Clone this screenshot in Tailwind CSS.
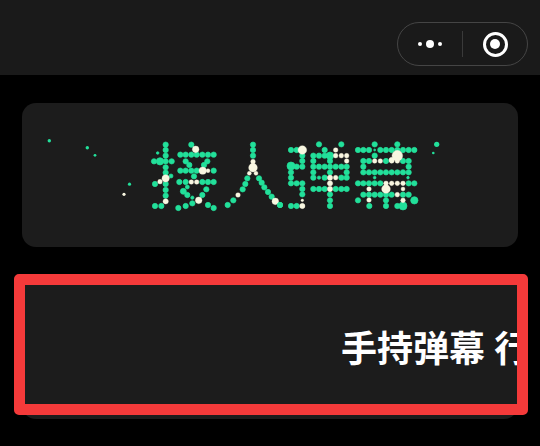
<!doctype html>
<html lang="zh">
<head>
<meta charset="utf-8">
<script src="https://cdn.jsdelivr.net/npm/@tailwindcss/browser@4"></script>
</head>
<body class="bg-black">
<div class="relative w-[540px] h-[446px] overflow-hidden bg-black font-['Noto_Sans_CJK_SC','Noto_Sans',sans-serif]">
  <header class="h-[75px] bg-[#1a1a1a] flex justify-end items-start pt-[22px] pr-[12px]">
    <div class="w-[131px] h-[44px] rounded-full border border-[#454545] flex items-center">
      <div class="w-[64px] flex items-center justify-center gap-[4px]">
        <span class="w-[4px] h-[4px] rounded-full bg-white"></span>
        <span class="w-[8px] h-[8px] rounded-full bg-white"></span>
        <span class="w-[4px] h-[4px] rounded-full bg-white"></span>
      </div>
      <div class="w-px h-[26px] bg-[#3a3a3a]"></div>
      <div class="flex-1 flex items-center justify-center">
        <div class="w-[25px] h-[25px] rounded-full border-[3px] border-white flex items-center justify-center">
          <span class="w-[10px] h-[10px] rounded-full bg-white"></span>
        </div>
      </div>
    </div>
  </header>
  <main class="px-[22px] pt-[28px] flex flex-col gap-[28px]">
    <section class="h-[144px] rounded-[14px] bg-[#1c1c1c] overflow-hidden">
      <svg class="block" width="496" height="144" viewBox="22 103 496 144" role="img" aria-label="接人弹幕">
        <g fill="#22e09a">
          <circle cx="49.3" cy="140.7" r="1.7"/><circle cx="87.3" cy="147.7" r="1.7"/><circle cx="95" cy="155.3" r="1.4"/><circle cx="129.5" cy="184.2" r="1.6"/><circle cx="436.7" cy="144.3" r="2.6"/><circle cx="433.3" cy="153" r="1.3"/>
        </g>
        <circle cx="124" cy="194.3" r="1.6" fill="#f8f6e0"/>
        <g transform="translate(130 125) scale(.33333)">
          <g fill="#22e09a" stroke="#22e09a" stroke-width="2">
            <circle cx="107" cy="59" r="8"/><circle cx="107" cy="75" r="8"/><circle cx="107" cy="92" r="8"/><circle cx="107" cy="127" r="8"/><circle cx="107" cy="143" r="8"/><circle cx="107" cy="177" r="8"/><circle cx="107" cy="195" r="8"/><circle cx="107" cy="212" r="8"/>
            <circle cx="72" cy="109" r="8"/><circle cx="90" cy="109" r="11"/><circle cx="107" cy="109" r="8"/><circle cx="125" cy="109" r="8"/><circle cx="83" cy="84" r="4"/><circle cx="75" cy="177" r="8"/><circle cx="123" cy="153" r="6"/><circle cx="94" cy="243" r="8"/><circle cx="75" cy="243" r="8"/>
            <circle cx="184" cy="59" r="8"/>
            <circle cx="151" cy="89" r="8"/><circle cx="167" cy="89" r="8"/><circle cx="184" cy="89" r="8"/><circle cx="200" cy="89" r="8"/><circle cx="217" cy="89" r="8"/><circle cx="234" cy="89" r="8"/><circle cx="251" cy="89" r="8"/>
            <circle cx="167" cy="109" r="8"/><circle cx="178" cy="120" r="8"/><circle cx="232" cy="109" r="8"/><circle cx="222" cy="120" r="8"/>
            <circle cx="151" cy="137" r="8"/><circle cx="167" cy="137" r="8"/><circle cx="184" cy="137" r="8"/><circle cx="200" cy="137" r="8"/><circle cx="251" cy="137" r="8"/><circle cx="192" cy="154" r="8"/>
            <circle cx="148" cy="171" r="8"/><circle cx="167" cy="171" r="8"/><circle cx="217" cy="171" r="8"/><circle cx="234" cy="171" r="8"/><circle cx="251" cy="171" r="8"/>
            <circle cx="172" cy="186" r="6"/><circle cx="160" cy="199" r="9"/><circle cx="172" cy="210" r="8"/><circle cx="229" cy="193" r="8"/><circle cx="217" cy="210" r="8"/><circle cx="187" cy="218" r="5"/><circle cx="187" cy="235" r="8"/><circle cx="167" cy="243" r="8"/><circle cx="145" cy="249" r="8"/><circle cx="234" cy="240" r="8"/><circle cx="251" cy="249" r="8"/>
            <circle cx="369" cy="59" r="8"/><circle cx="369" cy="75" r="8"/><circle cx="369" cy="92" r="8"/>
            <circle cx="352" cy="160" r="8"/><circle cx="346" cy="177" r="8"/><circle cx="338" cy="193" r="8"/><circle cx="310" cy="226" r="8"/><circle cx="293" cy="240" r="8"/>
            <circle cx="387" cy="160" r="8"/><circle cx="395" cy="173" r="8"/><circle cx="403" cy="187" r="8"/><circle cx="414" cy="201" r="8"/><circle cx="425" cy="215" r="8"/><circle cx="450" cy="240" r="8"/>
          </g>
          <g fill="#f8f6e0" stroke="#f8f6e0" stroke-width="1">
            <circle cx="107" cy="160" r="11"/><circle cx="90" cy="170" r="7"/><circle cx="107" cy="229" r="8"/><circle cx="197" cy="73" r="10"/>
            <circle cx="218" cy="137" r="11"/><circle cx="234" cy="137" r="6"/><circle cx="184" cy="171" r="7"/><circle cx="200" cy="171" r="7"/><circle cx="206" cy="226" r="10"/>
            <circle cx="369" cy="110" r="7"/><circle cx="369" cy="128" r="13"/><circle cx="358" cy="145" r="6"/><circle cx="378" cy="145" r="6"/><circle cx="324" cy="210" r="7"/><circle cx="436" cy="229" r="10"/>
          </g>
        </g>
        <g transform="translate(280 125) scale(.33333)">
          <g fill="#22e09a" stroke="#22e09a" stroke-width="2">
            <circle cx="33" cy="75" r="8"/><circle cx="50" cy="75" r="8"/><circle cx="67" cy="92" r="8"/><circle cx="67" cy="108" r="8"/><circle cx="67" cy="125" r="8"/><circle cx="50" cy="125" r="8"/><circle cx="33" cy="123" r="12"/>
            <circle cx="33" cy="142" r="8"/><circle cx="33" cy="158" r="8"/><circle cx="33" cy="175" r="8"/><circle cx="50" cy="175" r="8"/><circle cx="67" cy="175" r="8"/><circle cx="67" cy="192" r="8"/><circle cx="67" cy="208" r="8"/><circle cx="50" cy="243" r="8"/><circle cx="33" cy="243" r="8"/><circle cx="0" cy="240" r="8"/>
            <circle cx="117" cy="58" r="8"/><circle cx="184" cy="58" r="8"/><circle cx="134" cy="75" r="8"/>
            <circle cx="100" cy="92" r="8"/><circle cx="117" cy="92" r="8"/><circle cx="134" cy="92" r="8"/><circle cx="150" cy="92" r="11"/><circle cx="100" cy="108" r="8"/><circle cx="150" cy="108" r="8"/>
            <circle cx="100" cy="125" r="8"/><circle cx="117" cy="125" r="8"/><circle cx="134" cy="125" r="8"/><circle cx="150" cy="125" r="8"/><circle cx="167" cy="125" r="8"/><circle cx="184" cy="125" r="8"/><circle cx="200" cy="125" r="8"/>
            <circle cx="100" cy="142" r="8"/><circle cx="150" cy="142" r="8"/><circle cx="200" cy="142" r="8"/>
            <circle cx="100" cy="158" r="8"/><circle cx="117" cy="158" r="5"/><circle cx="134" cy="158" r="8"/><circle cx="184" cy="158" r="8"/><circle cx="200" cy="158" r="8"/>
            <circle cx="100" cy="192" r="8"/><circle cx="117" cy="192" r="8"/><circle cx="134" cy="192" r="8"/><circle cx="167" cy="192" r="8"/><circle cx="184" cy="192" r="8"/><circle cx="200" cy="192" r="8"/>
            <circle cx="150" cy="208" r="8"/><circle cx="150" cy="226" r="8"/><circle cx="150" cy="243" r="8"/>
            <circle cx="234" cy="75" r="8"/><circle cx="250" cy="75" r="8"/><circle cx="267" cy="75" r="8"/><circle cx="284" cy="75" r="3"/><circle cx="301" cy="75" r="8"/><circle cx="318" cy="75" r="8"/><circle cx="335" cy="75" r="8"/><circle cx="352" cy="75" r="8"/><circle cx="369" cy="75" r="8"/><circle cx="386" cy="75" r="8"/><circle cx="403" cy="75" r="8"/>
            <circle cx="284" cy="58" r="8"/><circle cx="352" cy="58" r="8"/><circle cx="284" cy="92" r="8"/>
            <circle cx="250" cy="108" r="8"/><circle cx="267" cy="108" r="8"/><circle cx="318" cy="108" r="8"/><circle cx="369" cy="108" r="8"/><circle cx="386" cy="108" r="8"/>
            <circle cx="250" cy="125" r="8"/><circle cx="386" cy="125" r="8"/>
            <circle cx="250" cy="142" r="8"/><circle cx="267" cy="142" r="8"/><circle cx="284" cy="142" r="8"/><circle cx="301" cy="142" r="8"/><circle cx="318" cy="142" r="8"/><circle cx="335" cy="142" r="8"/><circle cx="352" cy="142" r="8"/><circle cx="369" cy="142" r="8"/><circle cx="386" cy="142" r="8"/>
            <circle cx="284" cy="158" r="4"/><circle cx="384" cy="158" r="4"/>
            <circle cx="234" cy="175" r="8"/><circle cx="250" cy="175" r="8"/><circle cx="267" cy="175" r="8"/><circle cx="284" cy="175" r="8"/><circle cx="301" cy="175" r="8"/><circle cx="386" cy="175" r="8"/><circle cx="403" cy="175" r="8"/>
            <circle cx="250" cy="209" r="8"/><circle cx="267" cy="209" r="8"/><circle cx="284" cy="209" r="8"/><circle cx="301" cy="209" r="8"/><circle cx="318" cy="209" r="8"/><circle cx="335" cy="209" r="8"/><circle cx="369" cy="209" r="8"/><circle cx="386" cy="209" r="8"/>
            <circle cx="234" cy="226" r="8"/><circle cx="268" cy="243" r="8"/><circle cx="318" cy="226" r="8"/><circle cx="318" cy="243" r="8"/><circle cx="352" cy="243" r="8"/><circle cx="369" cy="243" r="12"/><circle cx="403" cy="226" r="11"/>
          </g>
          <g fill="#f8f6e0" stroke="#f8f6e0" stroke-width="1">
            <circle cx="67" cy="75" r="13"/><circle cx="67" cy="226" r="4"/><circle cx="67" cy="243" r="8"/>
            <circle cx="167" cy="75" r="7"/><circle cx="167" cy="92" r="7"/><circle cx="184" cy="92" r="7"/><circle cx="200" cy="92" r="7"/><circle cx="200" cy="108" r="7"/>
            <circle cx="150" cy="158" r="8"/><circle cx="167" cy="158" r="7"/><circle cx="150" cy="175" r="8"/><circle cx="150" cy="192" r="8"/>
            <circle cx="352" cy="92" r="16"/><circle cx="335" cy="105" r="8"/><circle cx="284" cy="108" r="7"/><circle cx="301" cy="108" r="7"/><circle cx="335" cy="108" r="7"/><circle cx="352" cy="108" r="7"/>
            <circle cx="318" cy="175" r="7"/><circle cx="335" cy="175" r="7"/><circle cx="352" cy="175" r="7"/><circle cx="369" cy="175" r="7"/><circle cx="318" cy="192" r="13"/><circle cx="267" cy="192" r="7"/><circle cx="369" cy="192" r="6"/>
            <circle cx="267" cy="225" r="7"/><circle cx="352" cy="209" r="7"/><circle cx="369" cy="226" r="7"/>
          </g>
        </g>
      </svg>
    </section>
    <section class="h-[144px] rounded-[14px] bg-[#1c1c1c] overflow-hidden flex items-center pl-[319px] pb-[3px]">
      <p class="whitespace-nowrap text-[36px] leading-none font-bold text-white [word-spacing:1px]">手持弹幕 行</p>
    </section>
  </main>
  <div class="absolute left-[14px] top-[274px] w-[514px] h-[141px] rounded-[5px] border-[11px] border-[#f43a3a]"></div>
</div>
</body>
</html>
